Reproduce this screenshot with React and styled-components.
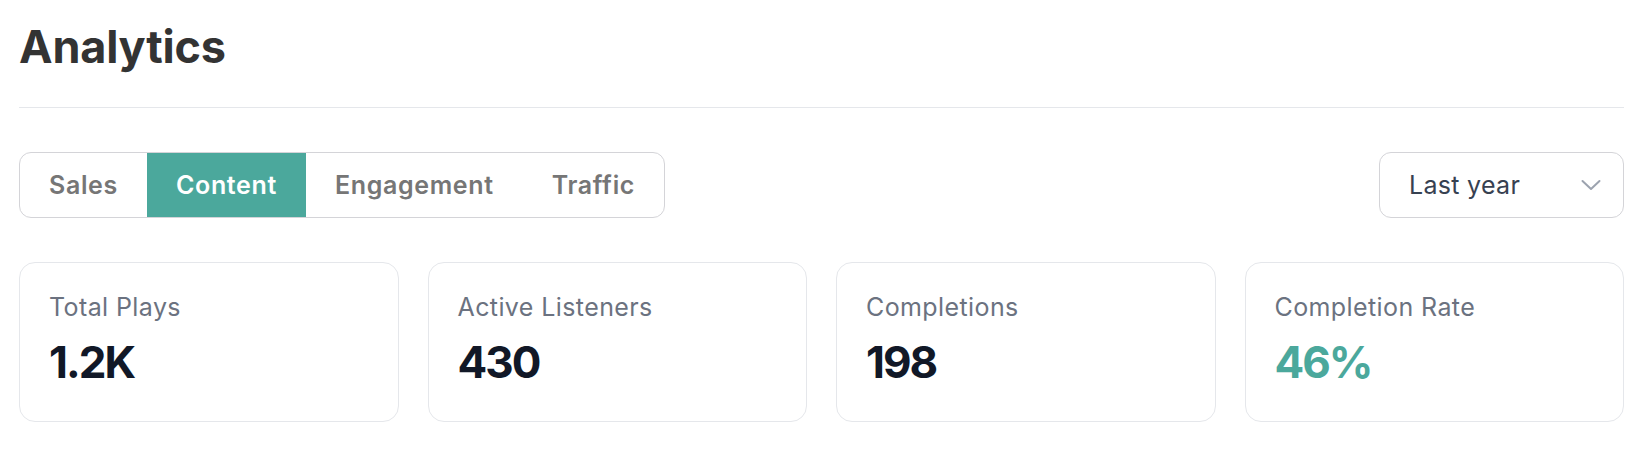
import React, { useState } from "react";
import styled, { createGlobalStyle } from "styled-components";

const GlobalStyle = createGlobalStyle`
    * {
        box-sizing: border-box;
    }
    body {
        margin: 0;
        background: #fff;
        font-family: Inter, "Noto Sans", sans-serif;
    }
`;

const Page = styled.div`
    padding: 20px 24px 30px 19px;
`;

const Header = styled.div`
    padding-bottom: 33px;
    border-bottom: 1px solid #e5e7eb;
`;

const Title = styled.h1`
    margin: 0;
    font-size: 45px;
    line-height: 54px;
    font-weight: 700;
    color: #333333;
    letter-spacing: -0.2px;
`;

const Toolbar = styled.div`
    margin-top: 44px;
    display: flex;
    justify-content: space-between;
    align-items: center;
`;

const TabGroup = styled.div`
    display: inline-flex;
    height: 66px;
    border: 1px solid #d4d4d8;
    border-radius: 12px;
    overflow: hidden;
`;

const Tab = styled.button`
    border: none;
    outline: none;
    margin: 0;
    padding: 0 29px;
    height: 100%;
    display: flex;
    align-items: center;
    font-family: inherit;
    font-size: 25px;
    font-weight: 600;
    letter-spacing: 0.65px;
    cursor: pointer;
    background-color: ${(p) => (p.$active ? "#4ba89c" : "transparent")};
    color: ${(p) => (p.$active ? "#ffffff" : "#767676")};
`;

const Select = styled.button`
    width: 245px;
    height: 66px;
    border: 1px solid #d4d4d8;
    border-radius: 12px;
    background: #fff;
    display: flex;
    align-items: center;
    justify-content: space-between;
    padding: 0 22px 0 29px;
    font-family: inherit;
    font-size: 25px;
    font-weight: 400;
    letter-spacing: 0.3px;
    color: #374151;
    cursor: pointer;

    svg {
        display: block;
    }
`;

const CardGrid = styled.div`
    margin-top: 44px;
    display: grid;
    grid-template-columns: repeat(4, 1fr);
    gap: 29px;
`;

const Card = styled.div`
    height: 160px;
    border: 1px solid #e5e7eb;
    border-radius: 16px;
    padding: 26px 29px 0;
`;

const CardLabel = styled.div`
    font-size: 25px;
    line-height: 37px;
    color: #6b7280;
    letter-spacing: 0.4px;
`;

const CardValue = styled.div`
    margin-top: 9px;
    font-size: 44px;
    line-height: 54px;
    font-weight: 700;
    letter-spacing: -2px;
    color: ${(p) => (p.$accent ? "#4ba89c" : "#111827")};
`;

const tabs = ["Sales", "Content", "Engagement", "Traffic"];

const stats = [
    { label: "Total Plays", value: "1.2K" },
    { label: "Active Listeners", value: "430" },
    { label: "Completions", value: "198" },
    { label: "Completion Rate", value: "46%", accent: true },
];

const Chevron = () => (
    <svg width="20" height="12" viewBox="0 0 20 12" fill="none">
        <path
            d="M1.5 2 L10 10 L18.5 2"
            stroke="#9ca3af"
            strokeWidth="2"
            strokeLinecap="round"
            strokeLinejoin="round"
        />
    </svg>
);

const App = () => {
    const [active, setActive] = useState("Content");

    return (
        <Page>
            <GlobalStyle />
            <Header>
                <Title>Analytics</Title>
            </Header>
            <Toolbar>
                <TabGroup>
                    {tabs.map((t) => (
                        <Tab
                            key={t}
                            $active={t === active}
                            onClick={() => setActive(t)}
                        >
                            {t}
                        </Tab>
                    ))}
                </TabGroup>
                <Select>
                    <span>Last year</span>
                    <Chevron />
                </Select>
            </Toolbar>
            <CardGrid>
                {stats.map((s) => (
                    <Card key={s.label}>
                        <CardLabel>{s.label}</CardLabel>
                        <CardValue $accent={s.accent}>{s.value}</CardValue>
                    </Card>
                ))}
            </CardGrid>
        </Page>
    );
};

export default App;
